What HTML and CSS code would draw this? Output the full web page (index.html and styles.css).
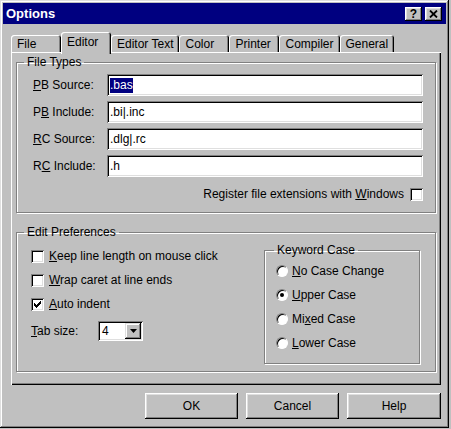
FILE: index.html
```html
<!DOCTYPE html>
<html lang="en">
<head>
  <meta charset="UTF-8">
  <title>Options</title>
  <link rel="stylesheet" href="styles.css">
</head>
<body>
  <div class="window">
    <div class="titlebar">
      <span class="title">Options</span>
      <div class="cap-buttons">
        <span class="cap-btn">?</span>
        <span class="cap-btn">
          <svg width="9" height="8" viewBox="0 0 9 8"><path d="M1 0.5 L8 7.5 M8 0.5 L1 7.5" stroke="#000" stroke-width="1.8"/></svg>
        </span>
      </div>
    </div>

    <div class="dialog">
      <div class="tabs">
        <div class="tab">File</div>
        <div class="tab active">Editor</div>
        <div class="tab">Editor Text</div>
        <div class="tab">Color</div>
        <div class="tab">Printer</div>
        <div class="tab">Compiler</div>
        <div class="tab">General</div>
      </div>

      <div class="panel">
        <fieldset class="group file-types">
          <legend>File Types</legend>
          <div class="fields">
            <label><u>P</u>B Source:</label>
            <div class="textbox"><span class="sel">.bas</span></div>
            <label>P<u>B</u> Include:</label>
            <div class="textbox">.bi|.inc</div>
            <label><u>R</u>C Source:</label>
            <div class="textbox">.dlg|.rc</div>
            <label>R<u>C</u> Include:</label>
            <div class="textbox">.h</div>
          </div>
          <div class="register-row">
            <span>Register file extensions with <u>W</u>indows</span>
            <span class="check"></span>
          </div>
        </fieldset>

        <fieldset class="group edit-prefs">
          <legend>Edit Preferences</legend>
          <div class="prefs">
            <div class="prefs-left">
              <div class="check-row"><span class="check"></span><span><u>K</u>eep line length on mouse click</span></div>
              <div class="check-row"><span class="check"></span><span><u>W</u>rap caret at line ends</span></div>
              <div class="check-row">
                <span class="check">
                  <svg width="7" height="7" viewBox="0 0 7 7"><path d="M0 2h1v1h1v1h1v-1h1v-1h1v-1h1v-1h1v3h-1v1h-1v1h-1v1h-1v1h-1v-1h-1v-1h-1z" fill="#000"/></svg>
                </span>
                <span><u>A</u>uto indent</span>
              </div>
              <div class="tab-size">
                <span class="tab-label"><u>T</u>ab size:</span>
                <div class="combo">
                  <span class="combo-value">4</span>
                  <span class="combo-btn">
                    <svg width="7" height="4" viewBox="0 0 7 4"><path d="M0 0h7l-3.5 4z" fill="#000"/></svg>
                  </span>
                </div>
              </div>
            </div>

            <fieldset class="group keyword">
              <legend>Keyword Case</legend>
              <div class="radios">
                <div class="radio-row"><span class="radio"></span><span><u>N</u>o Case Change</span></div>
                <div class="radio-row"><span class="radio on"></span><span><u>U</u>pper Case</span></div>
                <div class="radio-row"><span class="radio"></span><span>Mi<u>x</u>ed Case</span></div>
                <div class="radio-row"><span class="radio"></span><span><u>L</u>ower Case</span></div>
              </div>
            </fieldset>
          </div>
        </fieldset>
      </div>

      <div class="buttons">
        <button class="btn">OK</button>
        <button class="btn">Cancel</button>
        <button class="btn">Help</button>
      </div>
    </div>
  </div>
</body>
</html>
```

FILE: styles.css
```css
:root {
  --face: #c0c0c0;
  --light: #dfdfdf;
  --shadow: #808080;
  --dark: #000;
  --title: #000080;
}

* {
  box-sizing: border-box;
  margin: 0;
  padding: 0;
}

body {
  font-family: "Liberation Sans", Arial, sans-serif;
  font-size: 12px;
  color: #000;
  background: var(--face);
}

.window {
  width: 449px;
  height: 428px;
  padding: 3px;
  background: var(--face);
  box-shadow: inset -1px -1px var(--dark), inset 1px 1px var(--light),
              inset -2px -2px var(--shadow), inset 2px 2px #fff;
}

/* title bar */
.titlebar {
  height: 21px;
  background: var(--title);
  display: flex;
  align-items: center;
  justify-content: space-between;
  padding: 0 4px 0 3px;
}

.title {
  color: #fff;
  font-weight: bold;
  font-size: 13px;
}

.cap-buttons {
  display: flex;
  gap: 3px;
}

.cap-btn {
  width: 17px;
  height: 14px;
  background: var(--face);
  display: flex;
  align-items: center;
  justify-content: center;
  font-weight: bold;
  font-size: 12px;
  line-height: 1;
  box-shadow: inset -1px -1px var(--dark), inset 1px 1px #fff,
              inset -2px -2px var(--shadow), inset 2px 2px var(--light);
}

.dialog {
  padding: 8px 5px 0 8px;
}

/* tabs */
.tabs {
  display: flex;
  align-items: flex-start;
  height: 20px;
}

.tab {
  height: 17px;
  margin-top: 3px;
  min-width: 50px;
  padding: 1px 6px 0 6px;
  display: flex;
  align-items: center;
  border-radius: 3px 3px 0 0;
  background: var(--face);
  box-shadow: inset 1px 1px #fff, inset -1px 0 var(--dark), inset -2px 0 var(--shadow);
}

.tab.active {
  position: relative;
  z-index: 1;
  height: 22px;
  margin-top: 0;
  padding-bottom: 3px;
}

.panel {
  height: 333px;
  padding: 3px 5px 0 5px;
  box-shadow: inset 1px 1px #fff, inset -1px -1px var(--dark), inset -2px -2px var(--shadow);
}

/* group boxes */
.group {
  border: 1px solid var(--shadow);
  box-shadow: 1px 1px #fff, inset 1px 1px #fff;
  min-inline-size: 0;
}

.group legend {
  margin-left: 7px;
  padding: 0 3px;
  line-height: 14px;
}

.file-types {
  padding: 5px 12px 10px 0;
}

.fields {
  margin-left: 16px;
  display: grid;
  grid-template-columns: 74px 1fr;
  row-gap: 5px;
  align-items: center;
}

.textbox {
  height: 22px;
  padding: 0 3px;
  display: flex;
  align-items: center;
  background: #fff;
  box-shadow: inset 1px 1px var(--shadow), inset -1px -1px #fff,
              inset 2px 2px var(--dark), inset -2px -2px var(--light);
}

.sel {
  background: var(--title);
  color: #fff;
  line-height: 15px;
}

.register-row {
  display: flex;
  justify-content: flex-end;
  align-items: center;
  gap: 6px;
  height: 16px;
  margin-top: 9px;
}

.check {
  width: 13px;
  height: 13px;
  flex: none;
  background: #fff;
  display: flex;
  align-items: center;
  justify-content: center;
  box-shadow: inset 1px 1px var(--shadow), inset -1px -1px #fff,
              inset 2px 2px var(--dark), inset -2px -2px var(--light);
}

.edit-prefs {
  margin-top: 12px;
  padding: 4px 15px 7px 0;
}

.prefs {
  display: flex;
  padding-left: 14px;
}

.prefs-left {
  flex: 1;
  padding-top: 5px;
  display: flex;
  flex-direction: column;
  gap: 8px;
}

.check-row {
  display: flex;
  align-items: center;
  gap: 5px;
  height: 16px;
}

.tab-size {
  display: flex;
  align-items: center;
  margin-top: 1px;
}

.tab-label {
  width: 67px;
}

.combo {
  width: 45px;
  height: 20px;
  padding: 2px;
  display: flex;
  background: #fff;
  box-shadow: inset 1px 1px var(--shadow), inset -1px -1px #fff,
              inset 2px 2px var(--dark), inset -2px -2px var(--light);
}

.combo-value {
  flex: 1;
  padding-left: 2px;
  line-height: 16px;
}

.combo-btn {
  width: 16px;
  height: 16px;
  background: var(--face);
  display: flex;
  align-items: center;
  justify-content: center;
  box-shadow: inset -1px -1px var(--dark), inset 1px 1px var(--light),
              inset -2px -2px var(--shadow), inset 2px 2px #fff;
}

.keyword {
  width: 156px;
  padding: 6px 0 12px 0;
}

.keyword legend {
  margin-left: 9px;
}

.radios {
  padding-left: 11px;
  display: flex;
  flex-direction: column;
  gap: 8px;
}

.radio-row {
  display: flex;
  align-items: center;
  gap: 4px;
  height: 16px;
}

.radio {
  width: 12px;
  height: 12px;
  flex: none;
  border-radius: 50%;
  background: #fff;
  border: 1px solid;
  border-color: var(--shadow) #fff #fff var(--shadow);
  box-shadow: inset 1px 1px var(--dark);
  display: flex;
  align-items: center;
  justify-content: center;
}

.radio.on::after {
  content: "";
  width: 4px;
  height: 4px;
  border-radius: 50%;
  background: #000;
}

/* bottom buttons */
.buttons {
  display: flex;
  justify-content: flex-end;
  gap: 8px;
  margin-top: 8px;
}

.btn {
  width: 93px;
  height: 26px;
  border: none;
  background: var(--face);
  font-family: inherit;
  font-size: 12px;
  color: #000;
  box-shadow: inset -1px -1px var(--dark), inset 1px 1px #fff,
              inset -2px -2px var(--shadow), inset 2px 2px var(--light);
}

.btn:last-child {
  width: 94px;
}
```
